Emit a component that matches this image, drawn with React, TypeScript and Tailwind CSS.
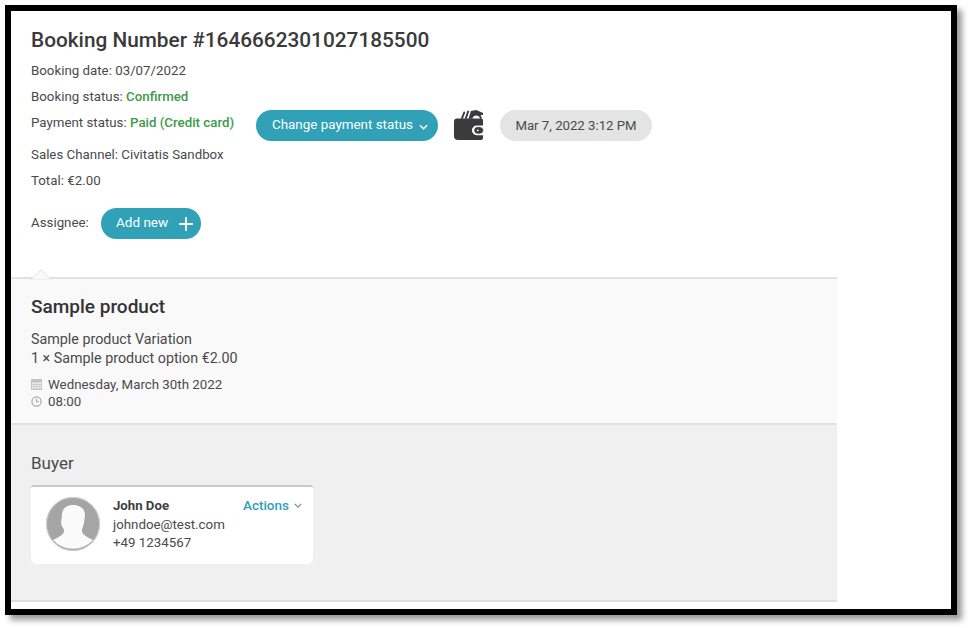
import React from "react";

const Chevron = ({ className }: { className: string }) => (
  <svg viewBox="0 0 10 6" className={className} fill="none" stroke="currentColor" strokeWidth="1.600">
    <path d="M1 1l4 4 4-4" />
  </svg>
);

const Wallet = () => (
  <svg viewBox="0 0 32 32" className="w-[31px] h-[31px] block" fill="#3b3b3d">
    <path d="M8 9 11 1.500l1.800.6L10.200 9zM12 9l3-8.500 1.800.5L14.200 9zM16 9l2.500-8L24 0l7 3v2.200h-2.500L30 9h-2c-1-4.500-7-4.500-8 0z" />
    <path d="M4 8.800h25c1.200 0 2 .8 2 2V16h-6.500a5 5 0 0 0 0 10H31v3c0 1.200-.8 2-2 2H5c-2.300 0-4-1.700-4-4V12c0-2 1.300-3.200 3-3.200z" />
    <rect x="21.500" y="17.200" width="10" height="7.600" rx="3.800" fill="#3b3b3d" stroke="#fff" strokeWidth="0.800" />
    <circle cx="25.500" cy="21" r="1" fill="#fff" />
  </svg>
);

const Row = ({ children, className }: { children: React.ReactNode; className: string }) => (
  <div className={`flex items-center text-[13.300px] leading-[18px] text-[#4a4a4a] ${className}`}>{children}</div>
);

export default function App() {
  return (
    <div className="w-[970px] h-[628px] bg-white pl-[5px] pt-[5px] overflow-hidden font-['Roboto',sans-serif]">
      <div className="w-[952px] h-[610px] border-[6px] border-black bg-white shadow-[5px_5px_6px_rgba(0,0,0,0.4)] overflow-hidden">
        <div className="w-[826px] h-full flex flex-col">
          <section className="h-[266px] pl-[20px] pt-[16px] shrink-0 bg-white">
            <h1 className="text-[20.800px] leading-[26px] font-medium text-[#3a3a3a]">
              Booking Number #1646662301027185500
            </h1>
            <Row className="mt-[9px]">Booking date: 03/07/2022</Row>
            <Row className="mt-[8px]">
              Booking status:&nbsp;<span className="font-medium text-[#3c9a4a]">Confirmed</span>
            </Row>
            <div className="flex items-center h-[31px] mt-[4px]">
              <Row className="w-[225px] -mt-[6px]">
                Payment status:&nbsp;<span className="font-medium text-[#3c9a4a]">Paid (Credit card)</span>
              </Row>
              <button className="h-[31px] w-[182px] rounded-full bg-[#30a1b7] text-white text-[13.400px] flex items-center pl-[16px] gap-[6px]">
                <span className="-mt-[1px]">Change payment status</span>
                <Chevron className="w-[9px] h-[6px] mt-[2px]" />
              </button>
              <div className="ml-[15px]">
                <Wallet />
              </div>
              <div className="ml-[16px] h-[31px] w-[152px] rounded-full bg-[#e4e4e4] text-[#4a4a4a] text-[13.200px] flex items-center justify-center">
                Mar 7, 2022 3:12 PM
              </div>
            </div>
            <Row className="mt-[5px]">Sales Channel: Civitatis Sandbox</Row>
            <Row className="mt-[8px]">Total: €2.00</Row>
            <div className="flex items-center mt-[18px]">
              <span className="text-[13.300px] text-[#4a4a4a] w-[70px] -mt-[2px]">Assignee:</span>
              <button className="h-[31px] w-[100px] rounded-full bg-[#30a1b7] text-white text-[13.500px] flex items-center pl-[15px] gap-[11px]">
                <span className="-mt-[3px]">Add new</span>
                <svg viewBox="0 0 14 14" className="w-[14px] h-[14px]" stroke="currentColor" strokeWidth="1.800">
                  <path d="M7 0v14M0 7h14" />
                </svg>
              </button>
            </div>
          </section>

          <section className="relative h-[148px] shrink-0 bg-[#f9f9f9] border-y-2 border-[#e1e1e1] pl-[20px] pt-[16px]">
            <svg viewBox="0 0 20 11" className="absolute left-[20px] -top-[10px] w-[20px] h-[11px]">
              <path d="M0 10.500 10 .8l10 9.700z" fill="#f9f9f9" stroke="#e1e1e1" strokeWidth="1" />
              <path d="M1 10.500h18V11H1z" fill="#f9f9f9" />
            </svg>
            <h2 className="text-[19px] leading-[24px] font-medium text-[#333]">Sample product</h2>
            <div className="mt-[11px] text-[14.300px] leading-[19px] text-[#4a4a4a]">Sample product Variation</div>
            <div className="text-[14.300px] leading-[19px] text-[#4a4a4a]">1 × Sample product option €2.00</div>
            <div className="mt-[8px] flex items-center gap-[6px] text-[13.300px] leading-[17px] text-[#4a4a4a]">
              <svg viewBox="0 0 11 11" className="w-[11px] h-[11px] text-[#c4c4c4]" fill="currentColor">
                <path d="M0 0h11v11H0z" />
                <path d="M1 3.500h1.500V5H1zM3.400 3.500h1.700V5H3.400zM6 3.500h1.700V5H6zM8.500 3.500H10V5H8.500zM1 5.800h1.500v1.500H1zM3.400 5.800h1.700v1.500H3.400zM6 5.800h1.700v1.500H6zM8.500 5.800H10v1.500H8.500zM1 8.100h1.500v1.500H1zM3.400 8.100h1.700v1.500H3.400zM6 8.100h1.700v1.500H6zM8.500 8.100H10v1.500H8.500z" fill="#f9f9f9" />
              </svg>
              Wednesday, March 30th 2022
            </div>
            <div className="flex items-center gap-[6px] text-[13.300px] leading-[17px] text-[#4a4a4a]">
              <svg viewBox="0 0 12 12" className="w-[11px] h-[11px] text-[#a8a8a8]" fill="none" stroke="currentColor" strokeWidth="1.300">
                <circle cx="6" cy="6" r="5" />
                <path d="M6 3v3.300h2.500" />
              </svg>
              08:00
            </div>
          </section>

          <section className="h-[177px] shrink-0 bg-[#f0f0f0] border-b-2 border-[#dedede] pl-[20px] pt-[28px]">
            <h3 className="text-[17px] leading-[20px] text-[#4a4a4a]">Buyer</h3>
            <div className="mt-[12px] w-[282px] h-[79px] bg-white rounded-b-[5px] rounded-t-[3px] border-t-2 border-[#c9c9c9] flex pl-[15px] pt-[10px] relative">
              <svg viewBox="0 0 54 54" className="w-[54px] h-[54px] shrink-0">
                <circle cx="27" cy="27" r="27" fill="#a5a5a5" />
                <path d="M27 8c6 0 12 3 12 10l-1 8c-1 4-2 5-2 8 0 4 6 6 11 9a27 27 0 0 1-40 0c5-3 11-5 11-9 0-3-2-4-2.500-6l-.5-2 1-8c0-7 5-10 11.500-10z" fill="#fafafa" />
                <circle cx="27" cy="27" r="26.500" fill="none" stroke="#d4d4d4" strokeWidth="1" />
              </svg>
              <div className="ml-[13px] text-[13.300px] leading-[18px] text-[#4a4a4a]">
                <div className="font-bold text-[13.200px] text-[#3f3f3f]">John Doe</div>
                <div className="mt-[1px]">johndoe@test.com</div>
                <div>+49 1234567</div>
              </div>
              <div className="absolute right-[11px] top-[9px] flex items-center gap-[5px] text-[13.500px] leading-[18px] font-medium text-[#30a1b7]">
                Actions
                <Chevron className="w-[8px] h-[5px] text-[#888]" />
              </div>
            </div>
          </section>
        </div>
      </div>
    </div>
  );
}
